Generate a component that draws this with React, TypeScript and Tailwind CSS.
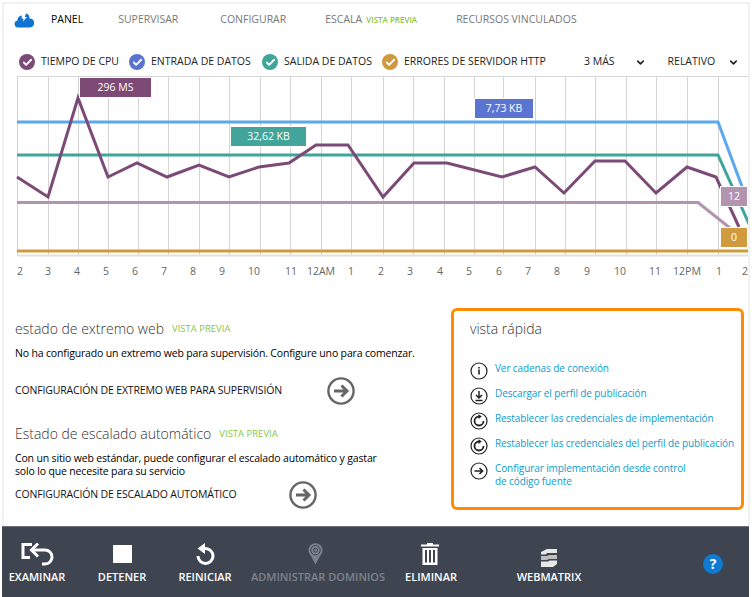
import { Check, ChevronDown } from "lucide-react"

const font = "font-['Open_Sans',sans-serif]"

const gridX = [17, 48, 78, 108, 138, 168, 199, 229, 260, 290, 321, 351, 383, 413, 444, 474, 503, 535, 565, 595, 626, 656, 687, 718]

const cpu = "17,177 48,197 78,98 108,177 137,163 167,177 199,165 229,177 259,167 289,163 316,145 348,145 383,197 414,163 447,163 502,177 535,167 564,193 595,161 625,161 656,193 687,167 716,177 739,227"

const axis: [string, number][] = [
  ["2", 20], ["3", 48], ["4", 77], ["5", 106], ["6", 135], ["7", 164], ["8", 193], ["9", 222], ["10", 254], ["11", 291], ["12AM", 321], ["1", 351],
  ["2", 381], ["3", 410], ["4", 440], ["5", 469], ["6", 499], ["7", 528], ["8", 557], ["9", 587], ["10", 620], ["11", 655], ["12PM", 687], ["1", 719], ["2", 745],
]

function Legend({ color, label, width }: { color: string; label: string; width: string }) {
  return (
    <div className={`flex items-center ${width}`}>
      <span className={`flex h-[16px] w-[16px] items-center justify-center rounded-full ${color}`}>
        <Check className="h-[11px] w-[11px] text-white" strokeWidth={4} />
      </span>
      <span className="ml-[6px] whitespace-nowrap text-[#222]">{label}</span>
    </div>
  )
}

function Arrow({ size = 28, stroke = "#666", width = 2.4 }: { size?: number; stroke?: string; width?: number }) {
  return (
    <svg width={size} height={size} viewBox="0 0 28 28" fill="none" stroke={stroke} strokeWidth={width}>
      <circle cx="14" cy="14" r="12.6" />
      <path d="M7 14h13M14.5 8.5 20 14l-5.500 5.500" strokeWidth={width + 0.6} />
    </svg>
  )
}

function QuickIcon({ kind }: { kind: string }) {
  return (
    <svg width="18" height="18" viewBox="0 0 18 18" fill="none" stroke="#222" strokeWidth="1.200" className="shrink-0">
      <circle cx="9" cy="9" r="8" />
      {kind === "info" && <path d="M9 7.500v5M9 5v1.500" strokeWidth="1.600" />}
      {kind === "download" && <path d="M9 4v6M6 8l3 3 3-3M5.500 13.500h7" strokeWidth="1.500" />}
      {kind === "reset" && (
        <>
          <path d="M13.500 9a4.500 4.500 0 1 1-4.500-4.500" strokeWidth="1.800" />
          <path d="M8.500 2.200l3.300 2.400L8.500 7z" fill="#222" stroke="none" />
        </>
      )}
      {kind === "arrow" && <path d="M4.500 9h8M9.500 6l3 3-3 3" strokeWidth="1.700" />}
    </svg>
  )
}

function QuickLink({ kind, children }: { kind: string; children: React.ReactNode }) {
  return (
    <div className="flex items-start">
      <QuickIcon kind={kind} />
      <span className="ml-[7px] whitespace-nowrap text-[10px] leading-[13px] tracking-[-0.1px] text-[#0a9ccf]">{children}</span>
    </div>
  )
}

function BarItem({ width, label, muted, children }: { width: string; label: string; muted?: boolean; children: React.ReactNode }) {
  return (
    <div className={`flex flex-col items-center ${width}`}>
      <div className="flex h-[30px] items-center justify-center">{children}</div>
      <span className={`whitespace-nowrap text-[11px] font-semibold leading-[16px] ${muted ? "text-[#7d838c]" : "text-white"}`}>{label}</span>
    </div>
  )
}

export default function App() {
  return (
    <div className={`h-[597px] w-[752px] overflow-hidden bg-white pl-[2px] pt-[2px] text-[10.500px] ${font}`}>
      <div className="h-[524px] w-[748px] border-x-2 border-t-2 border-[#f1f1f1]">
        <nav className="flex h-[31px] items-center text-[#777]">
          <svg width="20" height="16" viewBox="0 0 20 16" className="ml-[10px]" fill="#0f73d2">
            <path d="M4 15.500a3.600 3.600 0 0 1-.6-7.100A5 5 0 0 1 8 3.500l-.5 3h2L9 9.500l4-4.500h-2.200l1.200-3.500a4.300 4.300 0 0 1 3.400 5A4.200 4.200 0 0 1 16 15.500z" />
          </svg>
          <span className="ml-[17px] text-black">PANEL</span>
          <span className="ml-[35px]">SUPERVISAR</span>
          <span className="ml-[42px]">CONFIGURAR</span>
          <span className="ml-[39px]">ESCALA</span>
          <span className="ml-[4px] mt-[1px] text-[8px] font-semibold text-[#8cc63f]">VISTA PREVIA</span>
          <span className="ml-[39px]">RECURSOS VINCULADOS</span>
        </nav>

        <div className="mt-[13px] flex h-[28px] items-center pl-[15px]">
          <Legend color="bg-[#7b4a76]" label="TIEMPO DE CPU" width="w-[110px]" />
          <Legend color="bg-[#5b73cf]" label="ENTRADA DE DATOS" width="w-[133px]" />
          <Legend color="bg-[#3fa59b]" label="SALIDA DE DATOS" width="w-[120px]" />
          <Legend color="bg-[#cf9a3e]" label="ERRORES DE SERVIDOR HTTP" width="w-[202px]" />
          <span className="text-[#222]">3 MÁS</span>
          <ChevronDown className="ml-[20px] h-[11px] w-[11px] text-[#222]" strokeWidth={3.500} />
          <span className="ml-[22px] text-[#222]">RELATIVO</span>
          <ChevronDown className="ml-[13px] h-[11px] w-[11px] text-[#222]" strokeWidth={3.500} />
        </div>

        <div className="relative h-[210px] w-[744px]">
          <svg width="744" height="182" viewBox="4 76 744 182" fill="none">
            <path d="M17 76.500H748" stroke="#d6d6d6" />
            {gridX.map((x) => (
              <path key={x} d={`M${x + 0.5} 76V256`} stroke="#d4d4d4" />
            ))}
            <path d="M17 255.500H748" stroke="#e2e2e2" strokeWidth="2" />
            <polyline points="17,122 718,122 750,208" stroke="#5ba8ee" strokeWidth="3" />
            <polyline points="17,155 718,155 750,226" stroke="#3fa59b" strokeWidth="3" />
            <polyline points="17,202.500 698,202.500 730,228" stroke="#b294b0" strokeWidth="3" />
            <path d="M17 251H748" stroke="#d09a3e" strokeWidth="3" />
            <polyline points={cpu} stroke="#7b4a76" strokeWidth="3" strokeLinejoin="miter" />
          </svg>

          <div className="absolute left-[75px] top-[1px] flex h-[21px] w-[73px] items-center justify-center border border-white bg-[#7c4a75] text-white">296 MS</div>
          <div className="absolute left-[470px] top-[22px] flex h-[21px] w-[60px] items-center justify-center border border-white bg-[#5b73d1] text-white">7,73 KB</div>
          <div className="absolute left-[226px] top-[50px] flex h-[21px] w-[77px] items-center justify-center border border-white bg-[#42a49a] text-white">32,62 KB</div>
          <div className="absolute left-[716px] top-[110px] flex h-[21px] w-[28px] items-center justify-center border border-white bg-[#b294b0] text-white">12</div>
          <div className="absolute left-[716px] top-[151px] flex h-[21px] w-[28px] items-center justify-center border border-white bg-[#d09a3e] text-white">0</div>

          {axis.map(([label, x], i) => (
            <span
              key={i}
              className="absolute top-[188px] -translate-x-1/2 text-[#666]"
              style={{ left: x - 4 }}
            >
              {label}
            </span>
          ))}
        </div>

        <div className="mt-[22px] flex">
          <div className="w-[447px] pl-[11px] pt-[11px] tracking-[-0.16px]">
            <div className="flex items-center">
              <h2 className="text-[14px] font-light leading-[20px] tracking-normal text-[#333]">estado de extremo web</h2>
              <span className="ml-[8px] text-[9.500px] font-medium tracking-normal text-[#8cc63f]">VISTA PREVIA</span>
            </div>
            <p className="mt-[7px] leading-[14px] text-black">No ha configurado un extremo web para supervisión. Configure uno para comenzar.</p>
            <div className="mt-[17px] flex h-[28px] items-center">
              <span className="w-[312px] whitespace-nowrap text-[#111]">CONFIGURACIÓN DE EXTREMO WEB PARA SUPERVISIÓN</span>
              <Arrow />
            </div>
            <div className="mt-[19px] flex items-center">
              <h2 className="text-[14px] font-light leading-[20px] tracking-normal text-[#333]">Estado de escalado automático</h2>
              <span className="ml-[8px] text-[9.500px] font-medium tracking-normal text-[#8cc63f]">VISTA PREVIA</span>
            </div>
            <p className="mt-[8px] leading-[13px] text-black">
              Con un sitio web estándar, puede configurar el escalado automático y gastar
              <br />
              solo lo que necesite para su servicio
            </p>
            <div className="mt-[3px] flex h-[28px] items-center">
              <span className="w-[274px] whitespace-nowrap text-[#111]">CONFIGURACIÓN DE ESCALADO AUTOMÁTICO</span>
              <Arrow />
            </div>
          </div>

          <div className="h-[202px] w-[293px] rounded-[6px] border-[3px] border-[#ff8c00] pl-[16px] pt-[8px]">
            <h2 className="text-[14px] font-light leading-[20px] text-[#333]">vista rápida</h2>
            <div className="mt-[23px] flex flex-col gap-[7px]">
              <QuickLink kind="info">Ver cadenas de conexión</QuickLink>
              <QuickLink kind="download">Descargar el perfil de publicación</QuickLink>
              <QuickLink kind="reset">Restablecer las credenciales de implementación</QuickLink>
              <QuickLink kind="reset">Restablecer las credenciales del perfil de publicación</QuickLink>
              <QuickLink kind="arrow">
                Configurar implementación desde control
                <br />
                de código fuente
              </QuickLink>
            </div>
          </div>
        </div>
      </div>

      <div className="flex h-[71px] w-[747px] border-t border-[#6b7079] bg-[#3e4551] pt-[12px]">
        <BarItem width="w-[70px]" label="EXAMINAR">
          <svg width="34" height="24" viewBox="0 0 34 24" fill="none" stroke="#fff" strokeWidth="3">
            <path d="M12 2.500H3v13h7" />
            <path d="M18 1.500 11.500 8l6.500 6.500" />
            <path d="M12 8h13a6.500 6.500 0 0 1 0 14h-3" />
          </svg>
        </BarItem>
        <BarItem width="w-[100px]" label="DETENER">
          <div className="h-[18px] w-[19px] bg-white" />
        </BarItem>
        <BarItem width="w-[66px]" label="REINICIAR">
          <svg width="20" height="23" viewBox="0 0 20 23" fill="none" stroke="#fff" strokeWidth="3">
            <path d="M9 5.500h1.500a7.500 7.500 0 1 1-7.500 7.500" />
            <path d="M2.500 5.500 10 0v11z" fill="#fff" stroke="none" />
          </svg>
        </BarItem>
        <BarItem width="w-[160px]" label="ADMINISTRAR DOMINIOS" muted>
          <svg width="15" height="22" viewBox="0 0 15 22" fill="none" className="mr-[6px]">
            <path d="M7.500 21.500 2.500 12h10z" fill="#7d838c" />
            <circle cx="7.500" cy="7.200" r="7" fill="#7d838c" />
            <circle cx="7.500" cy="7.200" r="4.700" stroke="#3e4551" strokeWidth="1" />
            <circle cx="7.500" cy="7.200" r="2" stroke="#3e4551" strokeWidth="1" />
          </svg>
        </BarItem>
        <BarItem width="w-[66px]" label="ELIMINAR">
          <svg width="18" height="22" viewBox="0 0 18 22" fill="#fff" className="mr-[2px]">
            <path d="M6 0h6v1.500h6V3.500H0V1.500h6z" />
            <path fillRule="evenodd" d="M1.500 5h15v17h-15zM4 7v12.500h2V7zM8 7v12.500h2V7zM12 7v12.500h2V7z" />
          </svg>
        </BarItem>
        <BarItem width="w-[170px]" label="WEBMATRIX">
          <svg width="16" height="18" viewBox="0 0 16 18" className="mt-[8px]" fill="#e8e8e8">
            <path d="M0 3 6 0h10v4H6l-1 1.500H0z" />
            <path d="M0 7h6l2-1h8v4H8l-2 1H0z" fill="#bdbdbd" />
            <path d="M0 12.500h7l2-1h7V15l-4 3H0z" />
          </svg>
        </BarItem>
        <div className="ml-[69px] mt-[15px] flex h-[20px] w-[20px] items-center justify-center rounded-full bg-[#0f7ad1] text-[14px] font-bold leading-none text-white">?</div>
      </div>
    </div>
  )
}
